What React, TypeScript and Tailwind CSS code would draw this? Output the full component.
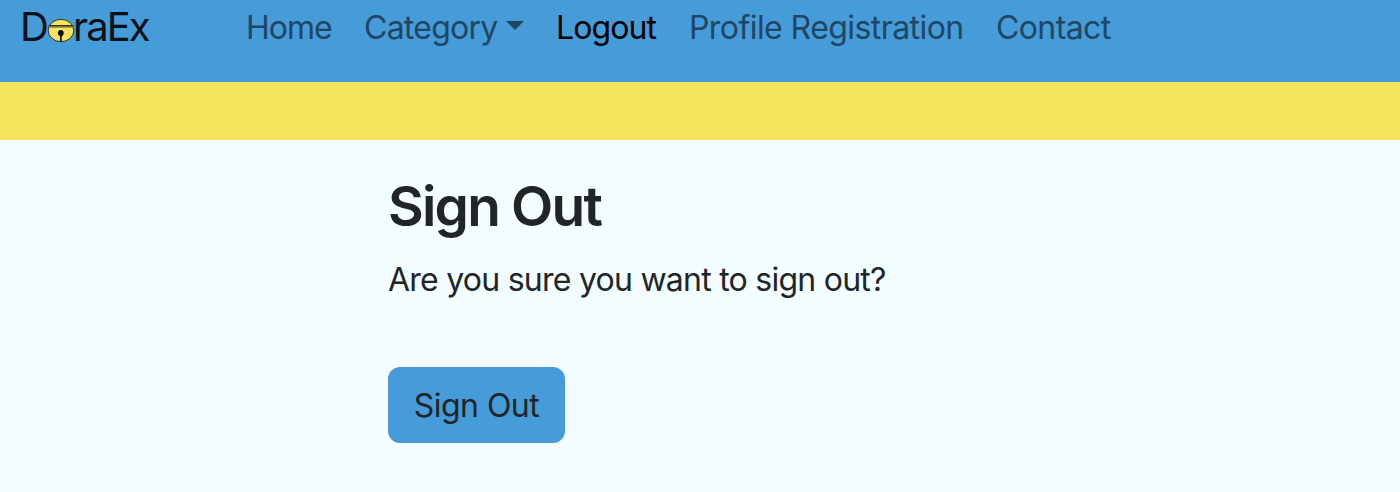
import React from "react";

function Bell() {
  return (
    <svg width="28" height="26" viewBox="0 0 28 26" className="mt-[18px] -mr-[2px] shrink-0">
      <ellipse cx="14" cy="12.5" rx="12.8" ry="11.2" fill="#f5e35b" stroke="#24303a" strokeWidth="1" />
      <path d="M1.6 7.2h24.8v2.4H1.6z" fill="#77702f" />
      <path d="M1.6 7.5h24.8" stroke="#2e3020" />
      <circle cx="13.8" cy="15" r="2.9" fill="#0b1116" />
      <path d="M13.9 15v8.5" stroke="#0b1116" strokeWidth="1.7" />
    </svg>
  );
}

export default function App() {
  return (
    <div className="h-[492px] overflow-hidden bg-[#f3fcfe] font-[Inter,sans-serif] text-[#212529]">
      <nav className="flex h-[82px] items-start bg-[#469bd9] pl-5 text-[32px] leading-[55px] tracking-[-0.75px] whitespace-nowrap">
        <a className="flex w-[226px] items-start text-[40px] leading-[54px] tracking-[-1.9px] text-[#0b1116]">
          <span>D</span>
          <Bell />
          <span>raEx</span>
        </a>
        <a className="w-[118px] tracking-[-1px] text-[#204664]">Home</a>
        <a className="flex w-[192px] items-start text-[#204664]">
          Category
          <svg width="18" height="9" viewBox="0 0 18 9" className="mt-[21px] ml-[8px]">
            <path d="M0 0h18L9 9z" fill="currentColor" />
          </svg>
        </a>
        <a className="w-[133px] tracking-[-0.9px] text-black">Logout</a>
        <a className="w-[307px] tracking-[-0.57px] text-[#204664]">Profile Registration</a>
        <a className="tracking-[-0.6px] text-[#204664]">Contact</a>
      </nav>
      <div className="h-[58px] bg-[#f5e35b]" />
      <main className="pt-[38px] pl-[388px]">
        <h1 className="text-[55px] leading-[56px] font-semibold tracking-[-1.8px]">Sign Out</h1>
        <p className="mt-[22px] text-[32px] leading-[48px] tracking-[-0.75px]">Are you sure you want to sign out?</p>
        <button className="mt-[63px] h-[76px] w-[177px] rounded-xl bg-[#469bd9] pt-[2px] text-[32px] tracking-[-0.55px]">Sign Out</button>
      </main>
    </div>
  );
}
